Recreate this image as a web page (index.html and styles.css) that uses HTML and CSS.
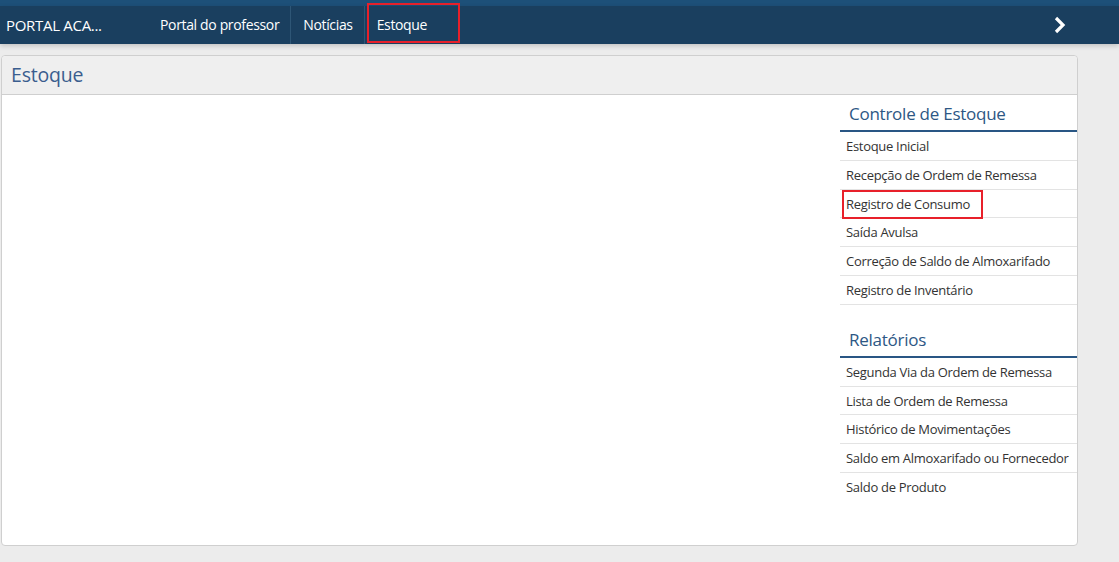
FILE: index.html
```html
<!DOCTYPE html>
<html lang="pt">
<head>
<meta charset="utf-8">
<title>Estoque</title>
<link rel="stylesheet" href="styles.css">
</head>
<body>
<div class="topstrip"></div>
<nav class="navbar">
  <div class="brand">PORTAL ACA...</div>
  <ul class="navlinks">
    <li class="navitem">Portal do professor</li>
    <li class="navitem">Notícias</li>
    <li class="navitem active">Estoque<span class="mark mark-nav"></span></li>
  </ul>
  <div class="navnext">
    <svg width="14" height="18" viewBox="0 0 14 18"><polyline points="3,2 10,9 3,16" fill="none" stroke="#fff" stroke-width="3.2" stroke-linejoin="miter"/></svg>
  </div>
</nav>
<main class="page">
  <section class="panel">
    <header class="panel-head">Estoque</header>
    <div class="panel-body">
      <div class="content"></div>
      <aside class="sidemenu">
        <div class="group">
          <h2 class="group-title">Controle de Estoque</h2>
          <ul class="items">
            <li>Estoque Inicial</li>
            <li>Recepção de Ordem de Remessa</li>
            <li class="marked">Registro de Consumo<span class="mark mark-item"></span></li>
            <li>Saída Avulsa</li>
            <li>Correção de Saldo de Almoxarifado</li>
            <li>Registro de Inventário</li>
          </ul>
        </div>
        <div class="group group-2">
          <h2 class="group-title">Relatórios</h2>
          <ul class="items last-open">
            <li>Segunda Via da Ordem de Remessa</li>
            <li>Lista de Ordem de Remessa</li>
            <li>Histórico de Movimentações</li>
            <li>Saldo em Almoxarifado ou Fornecedor</li>
            <li>Saldo de Produto</li>
          </ul>
        </div>
      </aside>
    </div>
  </section>
</main>
</body>
</html>
```
FILE: styles.css
```css
* { box-sizing: border-box; }
html, body { margin: 0; padding: 0; }
body {
  background: #ececec;
  font-family: "Open Sans", "Noto Sans", sans-serif;
  color: #333;
  height: 562px;
  overflow: hidden;
}
.topstrip {
  height: 6px;
  background: #1d5079;
}
.navbar {
  height: 38px;
  background: #1a3f5f;
  display: flex;
  align-items: stretch;
  color: #fff;
  box-shadow: 0 2px 5px rgba(0,0,0,0.18);
  position: relative;
}
.brand {
  font-size: 15px;
  line-height: 38px;
  padding-left: 6px;
  width: 148px;
  letter-spacing: -0.3px;
  white-space: nowrap;
}
.navlinks {
  list-style: none;
  margin: 0;
  padding: 0;
  display: flex;
  flex: 1;
}
.navitem {
  font-size: 14px;
  line-height: 38px;
  padding: 0 11px 0 12px;
  border-right: 1px solid #2e5676;
  position: relative;
  letter-spacing: -0.35px;
  white-space: nowrap;
}
.navitem.active { border-right: none; }
.navnext {
  width: 66px;
  display: flex;
  align-items: center;
}
.mark {
  position: absolute;
  border: 2px solid #e8202a;
  pointer-events: none;
}
.mark-nav {
  left: 2px;
  top: -3px;
  width: 93px;
  height: 40px;
}
.page {
  padding: 11px 41px 0 1px;
}
.panel {
  background: #fff;
  border: 1px solid #cfcfcf;
  border-radius: 4px;
  height: 491px;
  display: flex;
  flex-direction: column;
}
.panel-head {
  background: #efefef;
  border-bottom: 1px solid #cfcfcf;
  border-radius: 4px 4px 0 0;
  height: 39px;
  font-size: 19.5px;
  line-height: 37px;
  padding-left: 9px;
  color: #3a5d8e;
  letter-spacing: -0.2px;
}
.panel-body {
  flex: 1;
  display: flex;
}
.content { flex: 1; }
.sidemenu {
  width: 237px;
  padding-top: 6px;
}
.group-title {
  margin: 0;
  font-weight: normal;
  font-size: 17px;
  line-height: 25px;
  padding: 0 0 4px 9px;
  color: #2d5784;
  border-bottom: 2px solid #295684;
  letter-spacing: -0.25px;
  white-space: nowrap;
}
.group-2 { margin-top: 22px; }
.items {
  list-style: none;
  margin: 0;
  padding: 0;
}
.items li {
  font-size: 13px;
  line-height: 26.8px;
  padding: 1px 0 0 6px;
  border-bottom: 1px solid #e3e3e3;
  color: #333;
  position: relative;
  letter-spacing: -0.3px;
  white-space: nowrap;
}
.items.last-open li:last-child { border-bottom: none; }
.mark-item {
  left: 2px;
  top: 0;
  width: 141px;
  height: 29px;
}
```
